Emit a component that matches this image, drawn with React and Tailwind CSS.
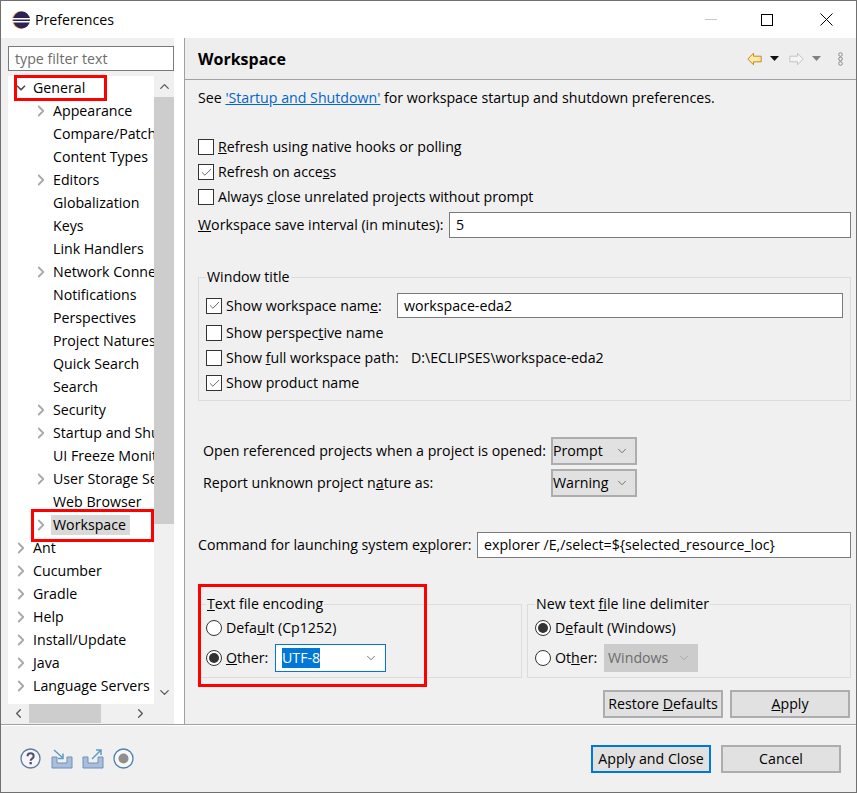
import { Check, ChevronDown, ChevronRight, ChevronUp, ChevronLeft } from "lucide-react";

const TREE = [
  { label: "General", depth: 0, open: true },
  { label: "Appearance", depth: 1, arrow: true },
  { label: "Compare/Patch", depth: 1 },
  { label: "Content Types", depth: 1 },
  { label: "Editors", depth: 1, arrow: true },
  { label: "Globalization", depth: 1 },
  { label: "Keys", depth: 1 },
  { label: "Link Handlers", depth: 1 },
  { label: "Network Connections", depth: 1, arrow: true },
  { label: "Notifications", depth: 1 },
  { label: "Perspectives", depth: 1 },
  { label: "Project Natures", depth: 1 },
  { label: "Quick Search", depth: 1 },
  { label: "Search", depth: 1 },
  { label: "Security", depth: 1, arrow: true },
  { label: "Startup and Shutdown", depth: 1, arrow: true },
  { label: "UI Freeze Monitoring", depth: 1 },
  { label: "User Storage Service", depth: 1, arrow: true },
  { label: "Web Browser", depth: 1 },
  { label: "Workspace", depth: 1, arrow: true, selected: true },
  { label: "Ant", depth: 0, arrow: true },
  { label: "Cucumber", depth: 0, arrow: true },
  { label: "Gradle", depth: 0, arrow: true },
  { label: "Help", depth: 0, arrow: true },
  { label: "Install/Update", depth: 0, arrow: true },
  { label: "Java", depth: 0, arrow: true },
  { label: "Language Servers", depth: 0, arrow: true },
];

function TreeRow({ item }) {
  return (
    <div className={`flex h-[23px] shrink-0 items-center whitespace-nowrap ${item.depth ? "pl-[27px]" : "pl-[7px]"}`}>
      <span className="flex w-[18px] shrink-0 items-center">
        {item.open && <ChevronDown size={14} strokeWidth={3} className="-ml-[1px] text-[#505050]" />}
        {item.arrow && <ChevronRight size={18} strokeWidth={2.4} className="-ml-[3px] text-[#a9a9a9]" />}
      </span>
      <span className={item.selected ? "-ml-[2px] bg-[#d9d9d9] pl-[2px] pr-[4px]" : ""}>{item.label}</span>
    </div>
  );
}

function Checkbox({ checked }) {
  return (
    <span className="flex h-[16px] w-[16px] shrink-0 items-center justify-center border border-[#333] bg-white">
      {checked && <Check size={13} strokeWidth={1.6} className="text-[#555]" />}
    </span>
  );
}

function CheckRow({ checked, className = "", children }) {
  return (
    <div className={`flex items-center gap-[4px] ${className}`}>
      <Checkbox checked={checked} />
      <span>{children}</span>
    </div>
  );
}

function Radio({ checked }) {
  return (
    <span className="flex h-[16px] w-[16px] shrink-0 items-center justify-center rounded-full border border-[#333] bg-white">
      {checked && <span className="h-[10px] w-[10px] rounded-full bg-[#333]" />}
    </span>
  );
}

function Combo({ value, className = "" }) {
  return (
    <div className={`flex items-center justify-between border-2 border-[#adadad] bg-[#e1e1e1] pr-[6px] ${className}`}>
      <span>{value}</span>
      <ChevronDown size={14} strokeWidth={1.2} className="text-[#444]" />
    </div>
  );
}

function Btn({ className = "border-[#adadad]", children }) {
  return (
    <div className={`flex h-[28px] w-[120px] items-center justify-center border-2 bg-[#e1e1e1] ${className}`}>
      <span>{children}</span>
    </div>
  );
}

function Field({ className = "", children }) {
  return <div className={`flex items-center border border-[#7a7a7a] bg-white px-[6px] ${className}`}>{children}</div>;
}

function EclipseLogo() {
  return (
    <svg width="20" height="20" viewBox="0 0 20 20">
      <circle cx="10" cy="10" r="9" fill="#e8a65c" />
      <circle cx="10.6" cy="10" r="8.4" fill="#2c2255" />
      <rect x="1" y="8" width="18" height="1.5" fill="#fff" />
      <rect x="1" y="11" width="18" height="1.5" fill="#fff" />
    </svg>
  );
}

function WindowButtons() {
  return (
    <div className="flex items-center pr-[23px]">
      <svg width="12" height="1" viewBox="0 0 12 1" className="mr-[44px]"><rect width="12" height="1" fill="#c8c8c8" /></svg>
      <svg width="12" height="12" viewBox="0 0 12 12" className="mr-[47px]"><rect x=".5" y=".5" width="11" height="11" fill="none" stroke="#000" /></svg>
      <svg width="13" height="13" viewBox="0 0 13 13"><path d="M.5.5l12 12M12.5.5l-12 12" stroke="#000" fill="none" /></svg>
    </div>
  );
}

function ToolbarIcons() {
  return (
    <div className="flex items-center">
      <svg width="15" height="14" viewBox="0 0 15 14" className="mr-[8px]">
        <path d="M.8 7 6.5 1.2v3h7.7v5.6H6.5v3z" fill="#fbe9a8" stroke="#c8881c" strokeWidth="1" />
      </svg>
      <svg width="9" height="5" viewBox="0 0 9 5" className="mr-[10px]"><path d="M0 0h9L4.5 5z" fill="#111" /></svg>
      <svg width="15" height="14" viewBox="0 0 15 14" className="mr-[8px]">
        <path d="M14.2 7 8.5 1.2v3H.8v5.6h7.7v3z" fill="#f4f4f4" stroke="#c4c4c4" strokeWidth="1" />
      </svg>
      <svg width="9" height="5" viewBox="0 0 9 5" className="mr-[17px]"><path d="M0 0h9L4.5 5z" fill="#808080" /></svg>
      <svg width="5" height="14" viewBox="0 0 5 14" className="mr-[2px]">
        <g fill="none" stroke="#8a8a8a" strokeWidth="1">
          <circle cx="2.5" cy="2.5" r="1.8" />
          <circle cx="2.5" cy="7" r="1.8" />
          <circle cx="2.5" cy="11.5" r="1.8" />
        </g>
      </svg>
    </div>
  );
}

function FooterIcons() {
  return (
    <div className="flex items-center">
      <svg width="21" height="21" viewBox="0 0 21 21" className="mr-[10px]">
        <circle cx="10.5" cy="10.5" r="9.5" fill="#f6f6fa" stroke="#5f7aa3" strokeWidth="1.3" />
        <path d="M7.5 8.2c0-4 6.2-4 6.2 0 0 2.4-3.1 2.4-3.1 4.6" fill="none" stroke="#4a4f6a" strokeWidth="2" />
        <rect x="9.5" y="14" width="2.3" height="2.3" fill="#4a4f6a" />
      </svg>
      <svg width="22" height="20" viewBox="0 0 22 20" className="mr-[9px]">
        <path d="M1 8h5v6h10V8h5v11H1z" fill="#a9bedb" stroke="#6d8fbd" strokeWidth="1" />
        <path d="M3 1l9 8M12 4.5V9.5H7" fill="none" stroke="#5b9cc4" strokeWidth="1.5" />
      </svg>
      <svg width="22" height="20" viewBox="0 0 22 20" className="mr-[9px]">
        <path d="M1 8h5v6h10V8h5v11H1z" fill="#a9bedb" stroke="#6d8fbd" strokeWidth="1" />
        <path d="M10 10l9-9M14 1h5v5" fill="none" stroke="#5b9cc4" strokeWidth="1.5" />
      </svg>
      <svg width="21" height="21" viewBox="0 0 21 21">
        <circle cx="10.5" cy="10.5" r="9.5" fill="#f8f8f8" stroke="#4f82ad" strokeWidth="1.3" />
        <circle cx="10.5" cy="10.5" r="5" fill="#8f8f8f" />
      </svg>
    </div>
  );
}

export default function App() {
  return (
    <div
      className="relative flex h-[793px] w-[857px] flex-col overflow-hidden border border-[#707070] bg-[#f0f0f0] text-[14.2px] leading-[20px] whitespace-nowrap text-black"
      style={{ fontFamily: '"Open Sans", "Noto Sans", sans-serif' }}
    >
      {/* title bar */}
      <div className="flex h-[37px] shrink-0 items-center bg-white pl-[10px]">
        <EclipseLogo />
        <span className="ml-[4px] flex-1">Preferences</span>
        <WindowButtons />
      </div>

      <div className="flex min-h-0 flex-1">
        {/* left: filter + tree */}
        <div className="flex w-[173px] shrink-0 flex-col pl-[7px] pt-[8px]">
          <div className="flex h-[25px] shrink-0 items-center border border-[#7a7a7a] bg-white pl-[6px] text-[#6d6d6d]">type filter text</div>
          <div className="mt-[5px] flex h-[628px] shrink-0">
            <div className="flex w-[146px] flex-col overflow-hidden bg-white">
              {TREE.map((item) => (
                <TreeRow key={item.label} item={item} />
              ))}
            </div>
            <div className="flex w-[20px] flex-col items-center">
              <div className="flex h-[21px] shrink-0 items-center justify-center">
                <ChevronUp size={15} strokeWidth={2} className="text-[#555]" />
              </div>
              <div className="h-[427px] w-full bg-[#cdcdcd]" />
              <div className="flex flex-1 items-end justify-center pb-[4px]">
                <ChevronDown size={15} strokeWidth={2} className="text-[#555]" />
              </div>
            </div>
          </div>
          <div className="flex h-[19px] items-center">
            <div className="flex w-[21px] items-center justify-center">
              <ChevronLeft size={15} strokeWidth={2} className="text-[#555]" />
            </div>
            <div className="h-full w-[72px] bg-[#cdcdcd]" />
            <div className="flex flex-1 items-center justify-center pl-[5px]">
              <ChevronRight size={15} strokeWidth={2} className="text-[#555]" />
            </div>
          </div>
        </div>
        <div className="w-[10px] shrink-0 bg-white" />

        {/* right: page */}
        <div className="flex min-w-0 flex-1 flex-col border-l border-[#a0a0a0]">
          <div className="flex h-[42px] shrink-0 items-center justify-between border-b border-[#a0a0a0] bg-[#eeeeee] pl-[13px] pr-[11px]">
            <span className="pt-[1px] text-[16px] font-bold">Workspace</span>
            <ToolbarIcons />
          </div>
          <div className="flex min-h-0 flex-1 flex-col pl-[13px] pr-[5px]">
            <div className="mt-[8px]">
              See <span className="text-[#0066cc] underline">'Startup and Shutdown'</span> for workspace startup and shutdown preferences.
            </div>
            <div className="mt-[29px] flex flex-col gap-[5px]">
              <CheckRow><u>R</u>efresh using native hooks or polling</CheckRow>
              <CheckRow checked>Refresh on acce<u>s</u>s</CheckRow>
              <CheckRow>Always <u>c</u>lose unrelated projects without prompt</CheckRow>
            </div>
            <div className="mt-[5px] flex items-center">
              <span className="w-[251px]"><u>W</u>orkspace save interval (in minutes):</span>
              <Field className="h-[26px] flex-1">5</Field>
            </div>

            <fieldset className="mt-[29px] flex h-[134px] flex-col border border-[#dcdcdc] pl-[7px] pr-[7px]">
              <legend className="px-[1px]">Window title</legend>
              <div className="mt-[6px] flex items-center">
                <CheckRow checked className="w-[191px]">Show workspace nam<u>e</u>:</CheckRow>
                <Field className="h-[25px] flex-1">workspace-eda2</Field>
              </div>
              <div className="mt-[5px] flex flex-col gap-[5px]">
                <CheckRow>Show perspec<u>t</u>ive name</CheckRow>
                <div className="flex items-center">
                  <CheckRow className="w-[205px]">Show <u>f</u>ull workspace path:</CheckRow>
                  <span>D:\ECLIPSES\workspace-eda2</span>
                </div>
                <CheckRow checked>Show product name</CheckRow>
              </div>
            </fieldset>

            <div className="mt-[36px] flex items-center pl-[5px]">
              <span className="w-[348px]">Open referenced projects when a project is opened:</span>
              <Combo value="Prompt" className="h-[28px] w-[86px]" />
            </div>
            <div className="mt-[4px] flex items-center pl-[5px]">
              <span className="w-[348px]">Report unknown project n<u>a</u>ture as:</span>
              <Combo value="Warning" className="h-[28px] w-[86px]" />
            </div>

            <div className="mt-[35px] flex items-center">
              <span className="w-[279px]">Command for launching system e<u>x</u>plorer:</span>
              <Field className="h-[26px] flex-1">explorer /E,/select=${"{selected_resource_loc}"}</Field>
            </div>

            <div className="mt-[36px] flex gap-[5px]">
              <fieldset className="h-[84px] w-[324px] border border-[#dcdcdc] pl-[7px]">
                <legend className="px-[1px]"><u>T</u>ext file encoding</legend>
                <div className="mt-[4px] flex items-center gap-[4px]">
                  <Radio />
                  <span>Defa<u>u</u>lt (Cp1252)</span>
                </div>
                <div className="mt-[6px] flex items-center gap-[4px]">
                  <Radio checked />
                  <span className="w-[45px]"><u>O</u>ther:</span>
                  <div className="flex h-[28px] w-[111px] items-center justify-between border border-[#0078d7] bg-white pl-[6px] pr-[7px]">
                    <span className="bg-[#0078d7] text-white">UTF-8</span>
                    <ChevronDown size={14} strokeWidth={1.2} className="text-[#444]" />
                  </div>
                </div>
              </fieldset>
              <fieldset className="h-[84px] flex-1 border border-[#dcdcdc] pl-[7px]">
                <legend className="px-[1px]">New text <u>f</u>ile line delimiter</legend>
                <div className="mt-[4px] flex items-center gap-[4px]">
                  <Radio checked />
                  <span>D<u>e</u>fault (Windows)</span>
                </div>
                <div className="mt-[6px] flex items-center gap-[4px]">
                  <Radio />
                  <span className="w-[45px]">Ot<u>h</u>er:</span>
                  <div className="flex h-[28px] w-[94px] items-center justify-between bg-[#cccccc] pl-[4px] pr-[7px] text-[#6d6d6d]">
                    <span>Windows</span>
                    <ChevronDown size={14} strokeWidth={1.2} className="text-[#999]" />
                  </div>
                </div>
              </fieldset>
            </div>

            <div className="mt-[12px] flex justify-end gap-[7px] pr-[1px]">
              <Btn>Restore <u>D</u>efaults</Btn>
              <Btn><u>A</u>pply</Btn>
            </div>
          </div>
        </div>
      </div>

      {/* footer */}
      <div className="flex h-[68px] shrink-0 items-center justify-between border-t border-[#a0a0a0] pl-[19px] pr-[15px] shadow-[inset_0_1px_0_#ffffff]">
        <FooterIcons />
        <div className="flex gap-[10px]">
          <Btn className="border-[#0078d7]">Apply and Close</Btn>
          <Btn>Cancel</Btn>
        </div>
      </div>

      {/* red callouts drawn on top of the screenshot */}
      <div className="absolute left-[13px] top-[74px] h-[26px] w-[93px] border-[3px] border-[#ff0000]" />
      <div className="absolute left-[30px] top-[508px] h-[33px] w-[123px] border-[3px] border-[#ff0000]" />
      <div className="absolute left-[197px] top-[583px] h-[103px] w-[229px] border-[3px] border-[#ff0000]" />
    </div>
  );
}
